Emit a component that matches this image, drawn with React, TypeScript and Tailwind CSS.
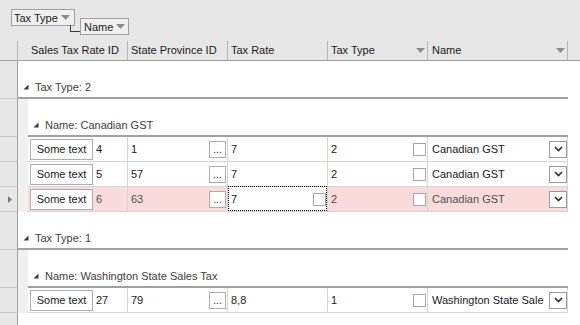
import React from "react";

const Tri = () => (
  <svg width="6" height="6" className="shrink-0">
    <polygon points="5.5,0.5 5.5,5.5 0.5,5.5" fill="#3a3a3a" />
  </svg>
);

const DownArrow = ({ color = "#8c8c8c" }: { color?: string }) => (
  <svg width="9" height="5" className="shrink-0">
    <polygon points="0,0 9,0 4.5,5" fill={color} />
  </svg>
);

const Chevron = () => (
  <svg width="9" height="6" className="shrink-0">
    <polyline points="1,1 4.5,4.5 8,1" fill="none" stroke="#333" strokeWidth="1.7" />
  </svg>
);

const RowHead = ({ indicator }: { indicator?: boolean }) => (
  <div className="w-[18px] shrink-0 bg-[#e6e6e6] border-r border-b border-r-[#a0a0a0] border-b-[#c8c8c8] flex items-center justify-center">
    {indicator && (
      <svg width="4" height="7" className="ml-[2px]">
        <polygon points="0,0 4,3.5 0,7" fill="#7a7a7a" />
      </svg>
    )}
  </div>
);

const Group1 = ({ text }: { text: string }) => (
  <div className="flex h-[38px]">
    <RowHead />
    <div className="w-[550px] border-b-2 border-[#a0a0a0] bg-white flex items-end pb-[3px] pl-[5px] gap-[6px] text-[#404040]">
      <div className="mb-[4px]">
        <Tri />
      </div>
      <span className="leading-[14px]">{text}</span>
    </div>
  </div>
);

const Group2 = ({ text }: { text: string }) => (
  <div className="flex h-[38px]">
    <RowHead />
    <div className="w-[10px] shrink-0 bg-[#f0f0f0]" />
    <div className="w-[540px] border-b-2 border-[#a0a0a0] bg-white flex items-end pb-[3px] pl-[5px] gap-[6px] text-[#404040]">
      <div className="mb-[4px]">
        <Tri />
      </div>
      <span className="leading-[14px]">{text}</span>
    </div>
  </div>
);

const Check = () => (
  <div className="w-[13px] h-[13px] border border-[#a6a6a6] bg-white shrink-0 ml-auto mr-[1px]" />
);

type Row = { id: string; sp: string; rate: string; type: string; name: string; sel?: boolean };

const DataRow = ({ r }: { r: Row }) => {
  const bg = r.sel ? "bg-[#fadbdb]" : "bg-white";
  const tc = r.sel ? "text-[#505050]" : "text-[#1a1a1a]";
  const cell = `h-full border-r border-b border-[#d6d6d6] flex items-center ${bg} ${tc}`;
  return (
    <div className="flex h-[25px]">
      <RowHead indicator={r.sel} />
      <div className="w-[10px] shrink-0 bg-[#f0f0f0]" />
      <div className={`w-[100px] ${cell}`}>
        <div className="ml-[2px] w-[63px] h-[21px] border border-[#adadad] bg-white flex items-center justify-center text-[#1a1a1a]">
          Some text
        </div>
        <span className="ml-[3px]">{r.id}</span>
      </div>
      <div className={`w-[100px] ${cell}`}>
        <span className="pl-[3px]">{r.sp}</span>
        <div className="ml-auto mr-[1px] w-[17px] h-[17px] border border-[#adadad] bg-white flex items-end justify-center text-[#1a1a1a] leading-[12px] pb-[1px] text-[10px]">
          ...
        </div>
      </div>
      {r.sel ? (
        <div className="relative w-[100px] h-full border-r border-b border-[#d6d6d6] flex items-center bg-white text-[#1a1a1a]">
          <span className="pl-[3px]">{r.rate}</span>
          <Check />
          <div className="absolute left-0 right-0 top-[-1px] bottom-0 border border-dotted border-black" />
        </div>
      ) : (
        <div className={`w-[100px] ${cell}`}>
          <span className="pl-[3px]">{r.rate}</span>
        </div>
      )}
      <div className={`w-[100px] ${cell}`}>
        <span className="pl-[3px]">{r.type}</span>
        <Check />
      </div>
      <div className={`w-[140px] ${cell}`}>
        <span className="pl-[4px] whitespace-nowrap">{r.name}</span>
        <div className="ml-auto w-[18px] h-[17px] border border-[#9a9a9a] bg-white flex items-center justify-center">
          <Chevron />
        </div>
      </div>
    </div>
  );
};

const rowsA: Row[] = [
  { id: "4", sp: "1", rate: "7", type: "2", name: "Canadian GST" },
  { id: "5", sp: "57", rate: "7", type: "2", name: "Canadian GST" },
  { id: "6", sp: "63", rate: "7", type: "2", name: "Canadian GST", sel: true },
];

const rowsB: Row[] = [
  { id: "27", sp: "79", rate: "8,8", type: "1", name: "Washington State Sale" },
];

export default function App() {
  return (
    <div className="w-[580px] h-[325px] overflow-hidden flex flex-col bg-white font-['Liberation_Sans',Arial,sans-serif] text-[11px] text-[#1a1a1a]">
      {/* Group panel */}
      <div className="relative h-[41px] shrink-0 bg-[#e6e6e6] flex items-start pl-[11px]">
        <div className="mt-[9px] w-[64px] h-[17px] border border-[#a0a0a0] bg-[#efefef] flex items-center pl-[2px] pr-[4px]">
          <span className="leading-[14px]">Tax Type</span>
          <div className="ml-auto">
            <DownArrow />
          </div>
        </div>
        <div className="mt-[18px] ml-[5px] w-[49px] h-[17px] border border-[#a0a0a0] bg-[#efefef] flex items-center pl-[3px] pr-[3px]">
          <span className="leading-[14px]">Name</span>
          <div className="ml-auto">
            <DownArrow />
          </div>
        </div>
        <div className="absolute left-[70px] top-[25px] w-[10px] h-[7px] border-l border-b border-[#3a3a3a]" />
      </div>

      {/* Column header */}
      <div className="flex h-[20px] shrink-0 bg-[#e6e6e6] border-b border-[#a0a0a0]">
        <div className="w-[18px] shrink-0 border-r border-[#b4b4b4]" />
        <div className="w-[110px] shrink-0 border-r border-[#b4b4b4] flex items-center pl-[13px] whitespace-nowrap">
          Sales Tax Rate ID
        </div>
        <div className="w-[100px] shrink-0 border-r border-[#b4b4b4] flex items-center pl-[3px] whitespace-nowrap">
          State Province ID
        </div>
        <div className="w-[100px] shrink-0 border-r border-[#b4b4b4] flex items-center pl-[3px]">
          Tax Rate
        </div>
        <div className="w-[100px] shrink-0 border-r border-[#b4b4b4] flex items-center pl-[3px] pr-[2px]">
          <span>Tax Type</span>
          <div className="ml-auto">
            <DownArrow />
          </div>
        </div>
        <div className="w-[140px] shrink-0 border-r border-[#b4b4b4] flex items-center pl-[4px] pr-[2px]">
          <span>Name</span>
          <div className="ml-auto">
            <DownArrow />
          </div>
        </div>
      </div>

      {/* Body */}
      <Group1 text="Tax Type: 2" />
      <Group2 text="Name: Canadian GST" />
      {rowsA.map((r, i) => (
        <DataRow key={i} r={r} />
      ))}
      <Group1 text="Tax Type: 1" />
      <Group2 text="Name: Washington State Sales Tax" />
      {rowsB.map((r, i) => (
        <DataRow key={i} r={r} />
      ))}
      <div className="flex flex-1">
        <div className="w-[18px] shrink-0 bg-[#e6e6e6] border-r border-[#a0a0a0]" />
      </div>
    </div>
  );
}
